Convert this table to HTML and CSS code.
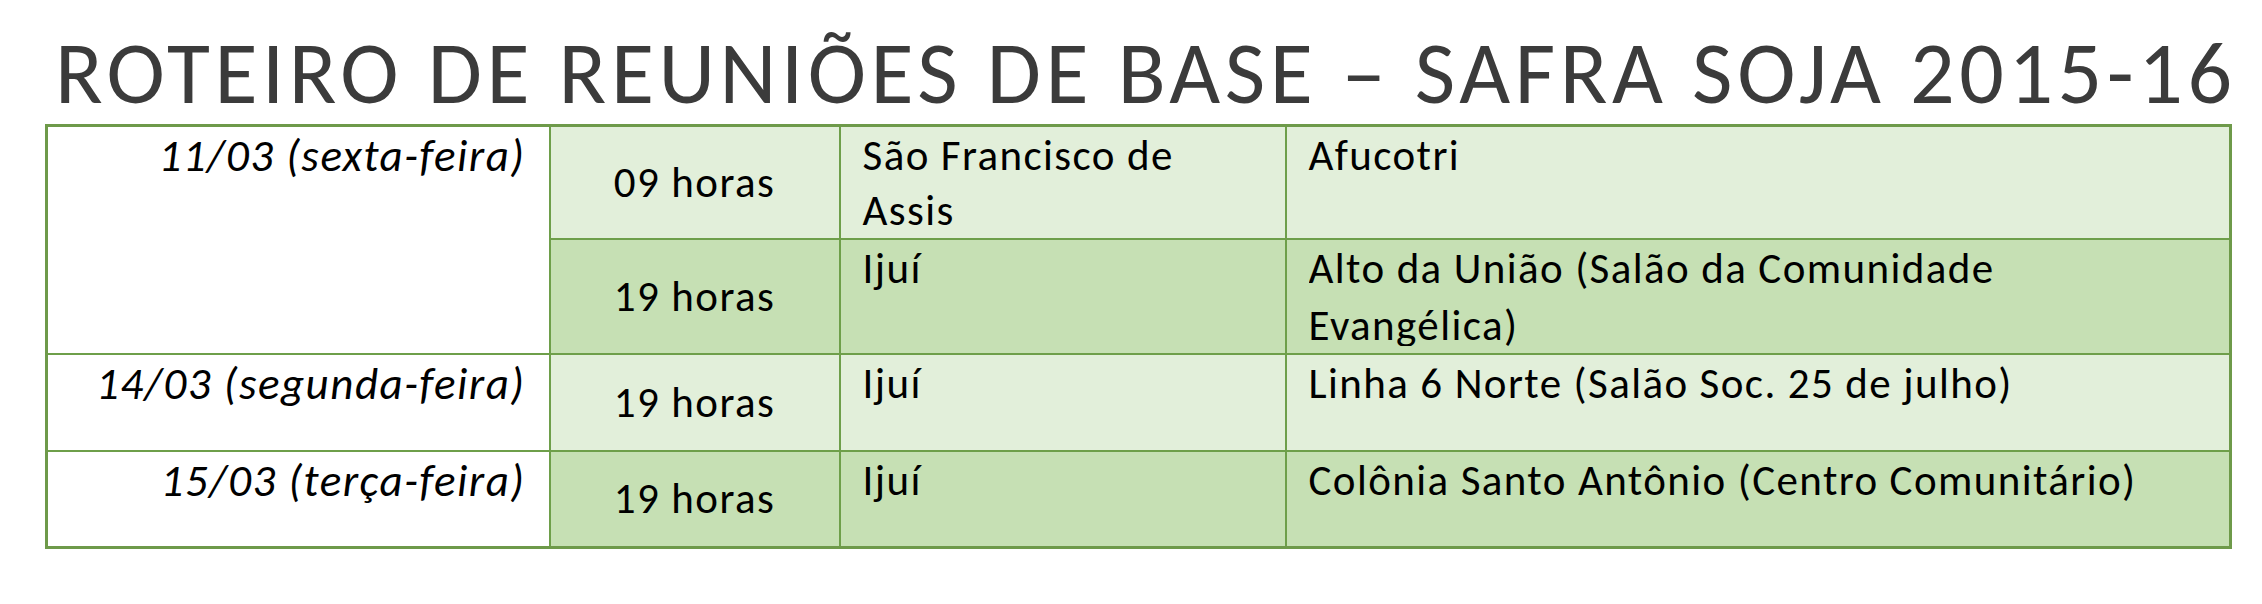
FILE: index.html
```html
<!DOCTYPE html>
<html lang="pt-BR">
<head>
<meta charset="utf-8">
<title>Roteiro de Reuniões de Base</title>
<link rel="stylesheet" href="styles.css">
</head>
<body>
<div class="page">
  <h1 class="title">ROTEIRO DE REUNIÕES DE BASE – SAFRA SOJA 2015-16</h1>
  <table class="schedule">
    <colgroup>
      <col class="c-date">
      <col class="c-time">
      <col class="c-city">
      <col class="c-place">
    </colgroup>
    <tbody>
      <tr class="r1 light">
        <td class="date" rowspan="2">11/03 (sexta-feira)</td>
        <td class="time">09 horas</td>
        <td class="city tight">São Francisco de Assis</td>
        <td class="place">Afucotri</td>
      </tr>
      <tr class="r2 dark">
        <td class="time">19 horas</td>
        <td class="city">Ijuí</td>
        <td class="place"><div class="clip">Alto da União (Salão da Comunidade Evangélica)</div></td>
      </tr>
      <tr class="r3 light">
        <td class="date">14/03 (segunda-feira)</td>
        <td class="time">19 horas</td>
        <td class="city">Ijuí</td>
        <td class="place">Linha 6 Norte (Salão Soc. 25 de julho)</td>
      </tr>
      <tr class="r4 dark">
        <td class="date">15/03 (terça-feira)</td>
        <td class="time">19 horas</td>
        <td class="city">Ijuí</td>
        <td class="place">Colônia Santo Antônio (Centro Comunitário)</td>
      </tr>
    </tbody>
  </table>
</div>
</body>
</html>
```
FILE: styles.css
```css
html, body {
  margin: 0;
  padding: 0;
  background: #ffffff;
}

.page {
  padding: 0 0 0 45px;
  font-family: "Carlito", "Lato", "Liberation Sans", sans-serif;
}

.title {
  margin: 0 0 7px 10px;
  padding-top: 29px;
  font-family: "Carlito", "Lato Light", "Lato", "Liberation Sans", sans-serif;
  font-weight: 300;
  font-size: 88px;
  line-height: 88px;
  color: #3b3b3b;
  white-space: nowrap;
  letter-spacing: 4.6px;
}

.schedule {
  width: 2184px;
  table-layout: fixed;
  border-collapse: collapse;
  border: 3px solid #6e9a4a;
  font-size: 43px;
  line-height: 57px;
  letter-spacing: 1.4px;
  color: #000;
}

.c-date { width: 503px; }
.c-time { width: 290px; }
.c-city { width: 446px; }
.c-place { width: 945px; }

.schedule td {
  border: 2px solid #6e9f4a;
  padding: 0 30px 0 22px;
  vertical-align: top;
}

.schedule td.tight {
  line-height: 55px;
  padding-top: 1px;
}

.schedule td.place {
  padding-right: 40px;
}

.r1 { height: 113px; }
.r2 { height: 115px; }
.r3 { height: 97px; }
.r4 { height: 96px; }

.light td { background: #e2efda; }
.dark td { background: #c6e0b4; }

.schedule td.date {
  background: #ffffff;
  font-style: italic;
  font-size: 45px;
  line-height: 48px;
  letter-spacing: 1.5px;
  text-align: right;
  padding: 5px 23px 0 10px;
}

.schedule td.time {
  text-align: center;
  vertical-align: middle;
  line-height: 48px;
  padding: 0 10px;
}

.clip {
  max-height: 106px;
  overflow: hidden;
}
```
